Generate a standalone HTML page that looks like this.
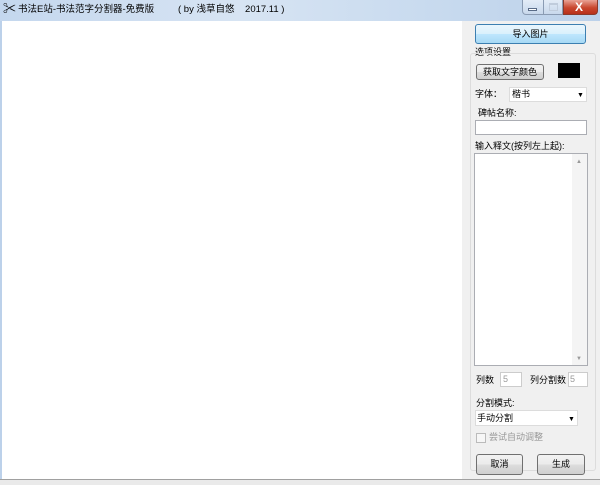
<!DOCTYPE html>
<html><head><meta charset="utf-8"><style>
*{margin:0;padding:0;box-sizing:border-box}
body{width:600px;height:485px;overflow:hidden;background:#f0f0f0;font-family:"Liberation Sans","Noto Sans CJK SC",sans-serif;font-size:9px;color:#000;position:relative}
.a{position:absolute}
.t{position:absolute;white-space:nowrap;font-size:9px;line-height:11px}
.btn{position:absolute;border:1px solid #707070;border-radius:3px;background:linear-gradient(#f2f2f2,#ebebeb 50%,#dddddd 51%,#cfcfcf);text-align:center;font-size:9px}
.in{position:absolute;background:#fff;border:1px solid #abadb3}
</style></head><body>
<div class="a" style="left:0;top:0;width:600px;height:21px;background:linear-gradient(90deg,#c4d7ee,#d7e4f3 40%,#c9dbef 70%,#bcd1ea)"></div>
<div class="t" style="left:3px;top:2px;font-size:13px;line-height:14px">✂</div>
<div class="t" style="left:18px;top:4px;font-size:9.5px">书法E站-书法范字分割器-免费版</div>
<div class="t" style="left:178px;top:4px;font-size:9.5px">( by 浅草自悠&nbsp;&nbsp;&nbsp; 2017.11 )</div>
<div class="a" style="left:522px;top:0;width:41px;height:15px;border:1px solid #8a9bb3;border-top:none;border-radius:0 0 0 4px;background:linear-gradient(#e3ecf7,#c8d8ec)"></div>
<div class="a" style="left:528px;top:8px;width:9px;height:3px;background:#fff;border:1px solid #5a6c88"></div>
<div class="a" style="left:543px;top:0;width:1px;height:15px;background:#8a9bb3"></div>
<div class="a" style="left:549px;top:3px;width:9px;height:8px;border:1px solid #c0ccdc;border-top-width:2px"></div>
<div class="a" style="left:563px;top:0;width:35px;height:15px;border:1px solid #8a3a2c;border-top:none;border-radius:0 0 4px 0;background:linear-gradient(#e9a396,#c9472f 55%,#b8301a)"></div>
<div class="t" style="left:575px;top:1px;color:#fff;font-weight:bold;font-size:12px;line-height:13px">X</div>
<div class="a" style="left:0;top:21px;width:2px;height:460px;background:#bcd1ea"></div>
<div class="a" style="left:2px;top:21px;width:460px;height:459px;background:#fff"></div>
<div class="a" style="left:0;top:479px;width:600px;height:1px;background:#a0a0a0"></div>
<div class="a" style="left:0;top:480px;width:600px;height:5px;background:#eaeaea"></div>
<div class="btn" style="left:475px;top:24px;width:111px;height:20px;border-color:#3c7fb1;line-height:18px;background:linear-gradient(#eaf6fd,#d9f0fc 50%,#bee6fd 51%,#a7d9f5)">导入图片</div>
<div class="t" style="left:475px;top:47px">选项设置</div>
<div class="a" style="left:470px;top:53px;width:126px;height:418px;border:1px solid #dcdcdc;border-radius:3px"></div>
<div class="btn" style="left:476px;top:64px;width:68px;height:16px;line-height:14px">获取文字颜色</div>
<div class="a" style="left:558px;top:63px;width:22px;height:15px;background:#000"></div>
<div class="t" style="left:475px;top:89px">字体：</div>
<div class="in" style="left:509px;top:87px;width:78px;height:15px;border-color:#dcdcdc"></div>
<div class="t" style="left:512px;top:89px">楷书</div>
<div class="t" style="left:577px;top:90px;font-size:7px">▼</div>
<div class="t" style="left:478px;top:108px">碑帖名称:</div>
<div class="in" style="left:475px;top:120px;width:112px;height:15px"></div>
<div class="t" style="left:475px;top:141px">输入释文(按列左上起):</div>
<div class="in" style="left:474px;top:153px;width:114px;height:213px"></div>
<div class="a" style="left:572px;top:154px;width:15px;height:211px;background:#f4f4f4"></div>
<div class="t" style="left:576px;top:157px;font-size:6px;color:#999">▲</div>
<div class="t" style="left:576px;top:354px;font-size:6px;color:#999">▼</div>
<div class="t" style="left:476px;top:375px">列数</div>
<div class="in" style="left:500px;top:372px;width:22px;height:15px;border-color:#ccc"></div>
<div class="t" style="left:503px;top:374px;color:#999">5</div>
<div class="t" style="left:530px;top:375px">列分割数</div>
<div class="in" style="left:568px;top:372px;width:20px;height:15px;border-color:#ccc"></div>
<div class="t" style="left:570px;top:374px;color:#999">5</div>
<div class="t" style="left:476px;top:398px">分割模式:</div>
<div class="in" style="left:475px;top:410px;width:103px;height:16px;border-color:#dcdcdc"></div>
<div class="t" style="left:477px;top:413px">手动分割</div>
<div class="t" style="left:568px;top:414px;font-size:7px">▼</div>
<div class="a" style="left:476px;top:433px;width:10px;height:10px;border:1px solid #bbb;background:#f6f6f6"></div>
<div class="t" style="left:489px;top:432px;color:#999">尝试自动调整</div>
<div class="btn" style="left:476px;top:454px;width:47px;height:21px;line-height:19px">取消</div>
<div class="btn" style="left:537px;top:454px;width:48px;height:21px;line-height:19px">生成</div>
</body></html>
